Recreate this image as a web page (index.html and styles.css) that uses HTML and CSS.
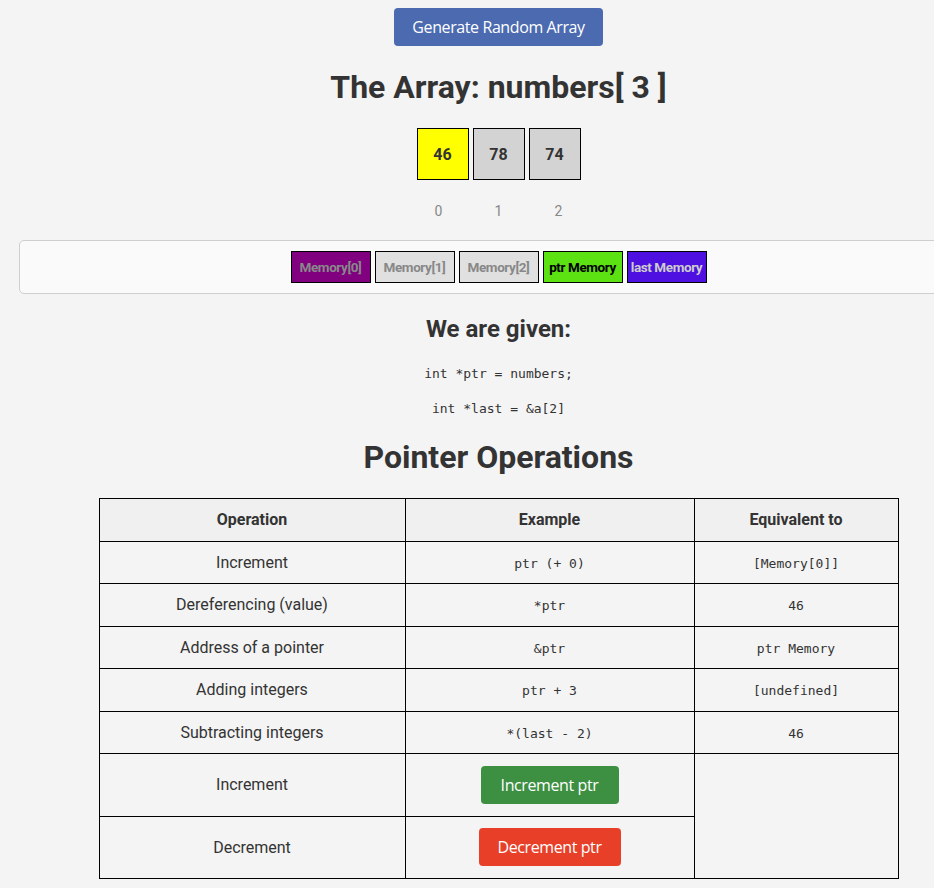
FILE: index.html
```html
<!DOCTYPE html>
<html>
<head>
<meta charset="utf-8">
<link rel="stylesheet" href="styles.css">
</head>
<body>
<div class="page">
  <div class="top">
    <button class="btn btn-gen">Generate Random Array</button>
  </div>
  <h1 class="title">The Array: numbers[ 3 ]</h1>
  <div class="cells">
    <div class="cell cell-on">46</div>
    <div class="cell">78</div>
    <div class="cell">74</div>
  </div>
  <div class="idxs">
    <div class="idx">0</div>
    <div class="idx">1</div>
    <div class="idx">2</div>
  </div>
  <div class="panel">
    <div class="mem mem-0">Memory[0]</div>
    <div class="mem mem-n">Memory[1]</div>
    <div class="mem mem-n">Memory[2]</div>
    <div class="mem mem-ptr">ptr Memory</div>
    <div class="mem mem-last">last Memory</div>
  </div>
  <h2 class="given">We are given:</h2>
  <p class="code-line"><code>int *ptr = numbers;</code></p>
  <p class="code-line"><code>int *last = &amp;a[2]</code></p>
  <h2 class="ops">Pointer Operations</h2>
  <table class="tbl">
    <thead>
      <tr><th class="c1">Operation</th><th class="c2">Example</th><th class="c3">Equivalent to</th></tr>
    </thead>
    <tbody>
      <tr><td>Increment</td><td><code>ptr (+ 0)</code></td><td><code>[Memory[0]]</code></td></tr>
      <tr><td>Dereferencing (value)</td><td><code>*ptr</code></td><td><code>46</code></td></tr>
      <tr><td>Address of a pointer</td><td><code>&amp;ptr</code></td><td><code>ptr Memory</code></td></tr>
      <tr><td>Adding integers</td><td><code>ptr + 3</code></td><td><code>[undefined]</code></td></tr>
      <tr><td>Subtracting integers</td><td><code>*(last - 2)</code></td><td><code>46</code></td></tr>
      <tr class="tall"><td>Increment</td><td><button class="btn btn-inc">Increment ptr</button></td><td rowspan="2"></td></tr>
      <tr class="tall"><td>Decrement</td><td><button class="btn btn-dec">Decrement ptr</button></td></tr>
    </tbody>
  </table>
</div>
</body>
</html>
```
FILE: styles.css
```css
html, body {
  margin: 0;
  padding: 0;
  background: #f4f4f4;
  overflow: hidden;
}
body {
  font-family: Roboto, "Liberation Sans", sans-serif;
  color: #333;
}
.page {
  width: 997px;
  padding-top: 8px;
  padding-bottom: 10px;
}
.top {
  display: flex;
  justify-content: center;
}
.btn {
  border: none;
  border-radius: 4px;
  color: #fff;
  font-family: "Open Sans", "Noto Sans", sans-serif;
  font-size: 16px;
  height: 38px;
  padding: 0 19px;
  cursor: pointer;
  letter-spacing: -0.4px;
}
.btn-gen {
  background: #4b6aaf;
  width: 209px;
  padding: 0;
}
.title {
  text-align: center;
  font-size: 32px;
  font-weight: 700;
  margin: 22px 0 0;
  line-height: 38px;
}
.cells {
  display: flex;
  justify-content: center;
  gap: 4px;
  margin-top: 22px;
}
.cell {
  width: 50px;
  height: 50px;
  border: 1px solid #000;
  background: #d3d3d3;
  display: flex;
  align-items: center;
  justify-content: center;
  font-weight: 700;
  font-size: 16px;
}
.cell-on {
  background: #ffff00;
}
.idxs {
  display: flex;
  justify-content: center;
  gap: 4px;
  margin-top: 22px;
}
.idx {
  width: 56px;
  text-align: center;
  color: #888;
  font-size: 14px;
  line-height: 18px;
}
.panel {
  margin: 20px 19px 0;
  height: 52px;
  border: 1px solid #cfcfcf;
  border-radius: 5px;
  background: #fafafa;
  display: flex;
  justify-content: center;
  align-items: center;
  gap: 4px;
}
.mem {
  width: 78px;
  height: 30px;
  border: 1px solid #000;
  display: flex;
  align-items: center;
  justify-content: center;
  font-size: 13.5px;
  font-weight: 700;
  letter-spacing: -0.4px;
  white-space: nowrap;
}
.mem-0 { background: #800080; color: #888; }
.mem-n { background: #e0e0e0; color: #888; }
.mem-ptr { background: #5ce112; color: #000; }
.mem-last { background: #4d10e0; color: #ccc; }
.given {
  text-align: center;
  font-size: 24px;
  font-weight: 700;
  margin: 20px 0 0;
  line-height: 30px;
}
.code-line {
  text-align: center;
  margin: 20px 0 0;
  line-height: 18px;
}
.code-line + .code-line {
  margin-top: 16px;
}
code {
  font-family: "DejaVu Sans Mono", monospace;
  font-size: 13px;
}
.ops {
  text-align: center;
  font-size: 32px;
  font-weight: 700;
  margin: 20px 0 0;
  line-height: 38px;
}
.tbl {
  border-collapse: collapse;
  width: 800px;
  margin: 22px auto 0;
}
.tbl th, .tbl td {
  border: 1px solid #000;
  text-align: center;
  font-size: 16px;
  height: 41.5px;
  padding: 0 8px;
}
.tbl th {
  background: #f0f0f0;
  font-weight: 700;
}
.c1 { width: 289px; }
.c2 { width: 272px; }
.c3 { width: 187px; }
.tbl tr.tall td {
  height: 61.5px;
}
.btn-inc {
  background: #3d8f42;
  width: 138px;
  padding: 0;
}
.btn-dec {
  background: #e83f28;
  width: 142px;
  padding: 0;
}
```
